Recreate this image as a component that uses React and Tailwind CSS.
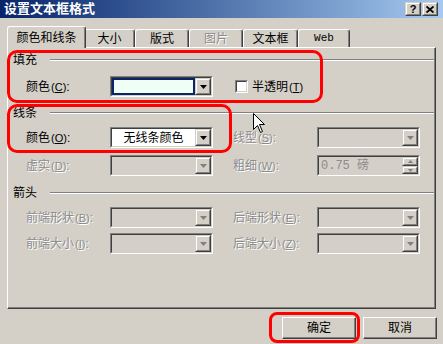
import React from 'react';

const FACE = 'bg-[#d4d0c8]';
const DIS = 'text-[#8c8c8c] [text-shadow:1px_1px_0_#ffffff]';

const Sunken = ({ className = '', children }) => (
  <div className={`border border-t-[#808080] border-l-[#808080] border-r-white border-b-white ${className}`}>
    <div className="h-full flex border border-t-[#404040] border-l-[#404040] border-r-[#d4d0c8] border-b-[#d4d0c8]">
      {children}
    </div>
  </div>
);

const Raised = ({ className = '', children }) => (
  <div className={`border border-t-[#d4d0c8] border-l-[#d4d0c8] border-r-[#404040] border-b-[#404040] bg-[#d4d0c8] ${className}`}>
    <div className="h-full w-full flex items-center justify-center border border-t-white border-l-white border-r-[#808080] border-b-[#808080]">
      {children}
    </div>
  </div>
);

const Arrow = ({ disabled, up, w = 7, h = 4 }) => (
  <svg width={w} height={h} viewBox={`0 0 ${w} ${h}`}>
    <path
      d={up ? `M${w / 2} 0L${w} ${h}H0z` : `M0 0H${w}L${w / 2} ${h}z`}
      fill={disabled ? '#808080' : '#000000'}
    />
  </svg>
);

const Combo = ({ children, disabled, white }) => (
  <Sunken className="w-[103px] h-[21px]">
    <div className={`flex-1 flex items-center justify-center ${white ? 'bg-white' : 'bg-[#d4d0c8]'}`}>{children}</div>
    <Raised className="w-[16px] h-full">
      <Arrow disabled={disabled} />
    </Raised>
  </Sunken>
);

const Label = ({ text, k, disabled, className = 'w-[84px]' }) => (
  <span className={`${className} text-[12px] leading-[16px] whitespace-nowrap ${disabled ? DIS : 'text-black'}`}>
    {text}
    <span className="text-[11px] ml-[1px]">
      (<span className="underline">{k}</span>)
    </span>
    :
  </span>
);

const Header = ({ children }) => (
  <div className="h-[16px] flex items-center pl-[5px] pr-[1px]">
    <span className="w-[37px] text-[12px] leading-[16px] text-black">{children}</span>
    <div className="flex-1 h-[2px] border-t border-t-[#808080] border-b border-b-white" />
  </div>
);

const Row = ({ className = '', children }) => (
  <div className={`h-[21px] flex items-center pl-[18px] ${className}`}>{children}</div>
);

const Tab = ({ children, active, disabled, w }) => (
  <div
    className={`${w} flex items-center justify-center text-[12px] border-l border-t border-l-white border-t-white border-r border-r-[#404040] shadow-[inset_-1px_0_0_#808080] rounded-t-[3px] ${FACE} ${
      active ? 'h-[22px] -mb-[1px] relative z-10 -mx-[2px]' : 'h-[18px]'
    } ${disabled ? DIS : 'text-black'}`}
  >
    {children}
  </div>
);

const Button = ({ children }) => (
  <div className="w-[74px] h-[22px] border border-t-white border-l-white border-r-[#404040] border-b-[#404040] shadow-[inset_-1px_-1px_0_#808080] flex items-center justify-center text-[12px] text-black">
    {children}
  </div>
);

export default function App() {
  return (
    <div className={`relative w-[443px] h-[344px] overflow-hidden ${FACE} font-['Liberation_Sans','Noto_Sans_CJK_SC',sans-serif]`}>
      {/* title bar */}
      <div className="h-[18px] flex items-center bg-linear-to-r from-[#0a246a] to-[#a6caf0] pl-[4px] pr-[5px]">
        <span className="flex-1 text-white font-bold text-[13px] leading-[18px]">设置文本框格式</span>
        <Raised className="w-[16px] h-[14px]">
          <span className="text-[11px] font-bold leading-none text-black">?</span>
        </Raised>
        <Raised className="w-[16px] h-[14px] ml-[1px]">
          <svg width="8" height="7" viewBox="0 0 8 7">
            <path d="M0.5 0.5L7.5 6.5M7.5 0.5L0.5 6.5" stroke="#000" strokeWidth="1.8" />
          </svg>
        </Raised>
      </div>

      {/* tabs */}
      <div className="mt-[8px] h-[21px] flex items-end pl-[9px]">
        <Tab active w="w-[79px]">颜色和线条</Tab>
        <Tab w="w-[51px]">大小</Tab>
        <Tab w="w-[54px]">版式</Tab>
        <Tab w="w-[54px]" disabled>图片</Tab>
        <Tab w="w-[55px]">文本框</Tab>
        <Tab w="w-[52px]">
          <span className="font-['Liberation_Mono',monospace] text-[11px]">Web</span>
        </Tab>
      </div>

      {/* panel */}
      <div className="mx-[7px] h-[262px] border border-l-white border-t-white border-r-[#404040] border-b-[#404040] shadow-[inset_-1px_-1px_0_#808080] pt-[4px]">
        <Header>填充</Header>
        <Row className="mt-[8px]">
          <Label text="颜色" k="C" />
          <Sunken className="w-[103px] h-[21px]">
            <div className="flex-1 bg-[#0a246a] p-[2px]">
              <div className="h-full bg-[#f0fff6]" />
            </div>
            <Raised className="w-[16px] h-full">
              <Arrow />
            </Raised>
          </Sunken>
          <div className="ml-[22px] flex items-center">
            <Sunken className="w-[13px] h-[13px]">
              <div className="flex-1 bg-white" />
            </Sunken>
            <span className="ml-[4px] text-[12px] text-black whitespace-nowrap">
              半透明
              <span className="text-[11px] ml-[1px]">
                (<span className="underline">T</span>)
              </span>
            </span>
          </div>
        </Row>

        <div className="mt-[8px]">
          <Header>线条</Header>
        </div>
        <Row className="mt-[6px]">
          <Label text="颜色" k="O" />
          <Combo white>
            <span className="text-[12px] text-black">无线条颜色</span>
          </Combo>
          <div className="w-[20px]" />
          <Label text="线型" k="S" disabled />
          <Combo disabled />
        </Row>
        <Row className="mt-[7px]">
          <Label text="虚实" k="D" disabled />
          <Combo disabled />
          <div className="w-[20px]" />
          <Label text="粗细" k="W" disabled />
          <Sunken className="w-[103px] h-[21px]">
            <div className="flex-1 flex items-center pl-[2px] text-[12px] text-[#8c8c8c] font-['Liberation_Mono','Noto_Sans_CJK_SC',monospace]">
              0.75 磅
            </div>
            <div className="w-[16px] flex flex-col">
              <Raised className="h-[9px]">
                <Arrow up disabled w={5} h={3} />
              </Raised>
              <Raised className="h-[8px]">
                <Arrow disabled w={5} h={3} />
              </Raised>
            </div>
          </Sunken>
        </Row>

        <div className="mt-[9px]">
          <Header>箭头</Header>
        </div>
        <Row className="mt-[6px]">
          <Label text="前端形状" k="B" disabled />
          <Combo disabled />
          <div className="w-[20px]" />
          <Label text="后端形状" k="E" disabled />
          <Combo disabled />
        </Row>
        <Row className="mt-[5px]">
          <Label text="前端大小" k="I" disabled />
          <Combo disabled />
          <div className="w-[20px]" />
          <Label text="后端大小" k="Z" disabled />
          <Combo disabled />
        </Row>
      </div>

      {/* buttons */}
      <div className="mt-[8px] flex justify-end gap-[7px] pr-[6px]">
        <Button>确定</Button>
        <Button>取消</Button>
      </div>

      {/* red annotations */}
      <div className="absolute left-[7px] top-[50px] w-[316px] h-[53px] border-[3px] border-[#ff0000] rounded-[10px]" />
      <div className="absolute left-[7px] top-[104px] w-[225px] h-[49px] border-[3px] border-[#ff0000] rounded-[10px]" />
      <div className="absolute left-[269px] top-[312px] w-[91px] h-[31px] border-[3px] border-[#ff0000] rounded-[8px]" />

      {/* mouse cursor */}
      <svg className="absolute left-[253px] top-[113px]" width="13" height="21" viewBox="0 0 13 21">
        <path d="M0.5 0.5V16.5L4.5 12.5L7.5 19.5L9.5 18.5L6.5 11.5H11.5Z" fill="#ffffff" stroke="#000000" strokeWidth="1" />
      </svg>
    </div>
  );
}
